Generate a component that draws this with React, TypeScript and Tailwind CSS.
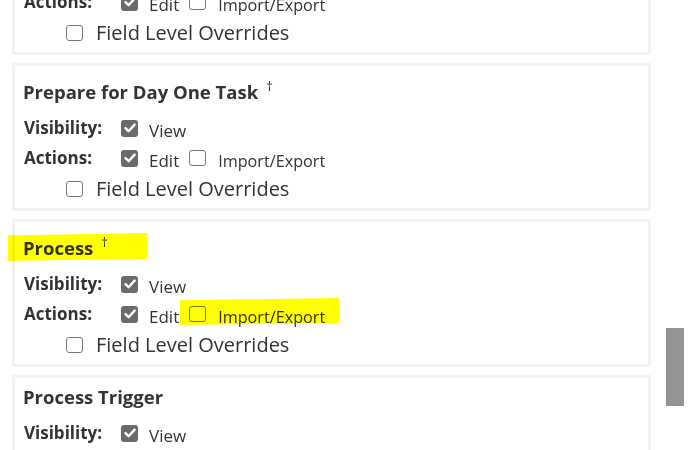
type Perm = {
  title: string;
  dagger?: boolean;
  view: boolean;
  edit: boolean;
  importExport: boolean;
  fieldOverrides: boolean;
};

const sections: Perm[] = [
  { title: "Onboarding Task", dagger: true, view: true, edit: true, importExport: false, fieldOverrides: false },
  { title: "Prepare for Day One Task", dagger: true, view: true, edit: true, importExport: false, fieldOverrides: false },
  { title: "Process", dagger: true, view: true, edit: true, importExport: false, fieldOverrides: false },
  { title: "Process Trigger", view: true, edit: true, importExport: false, fieldOverrides: false },
];

const Checkbox = ({ checked }: { checked: boolean }) =>
  checked ? (
    <span className="flex h-[17px] w-[17px] shrink-0 items-center justify-center rounded-[3px] bg-[#6b6b6b]">
      <svg width="12" height="10" viewBox="0 0 12 10" fill="none">
        <path d="M1.5 5.2 4.6 8.2 10.6 1.6" stroke="#fff" strokeWidth="2.4" strokeLinecap="round" strokeLinejoin="round" />
      </svg>
    </span>
  ) : (
    <span className="block h-[16px] w-[17px] shrink-0 rounded-[3px] border-[1.5px] border-[#767676] bg-white" />
  );

// yellow marker stroke, drawn over the text like a highlighter
const Marker = ({ className }: { className: string }) => (
  <svg className={`pointer-events-none absolute mix-blend-multiply ${className}`} viewBox="0 0 100 100" preserveAspectRatio="none">
    <path d="M0 8 L40 5 L100 0 L100 93 L60 95 L0 100 Z" fill="#ffff00" />
  </svg>
);

const Section = ({ s }: { s: Perm }) => (
  <div className="h-[148px] shrink-0 border-[3px] border-[#f2f2f2] bg-white pl-[8px] text-[#333]">
    <div className={`${s.dagger ? "mt-[14px]" : "mt-[7px]"} h-[24px] text-[18.5px] font-bold leading-[24px]`}>
      {s.title}
      {s.dagger && <span className="relative top-[-8px] ml-[8px] text-[13px] font-normal">†</span>}
    </div>
    <div className="mt-[9px] flex h-[30px] items-center">
      <span className="w-[98px] pl-[1px] text-[17px] font-bold">Visibility:</span>
      <Checkbox checked={s.view} />
      <span className="ml-[11px] pt-[6px] text-[17px]">View</span>
    </div>
    <div className="flex h-[30px] items-center">
      <span className="w-[98px] pl-[1px] text-[17px] font-bold">Actions:</span>
      <Checkbox checked={s.edit} />
      <span className="ml-[11px] mr-[10px] pt-[6px] text-[17px]">Edit</span>
      <Checkbox checked={s.importExport} />
      <span className="ml-[12px] pt-[6px] text-[16.2px]">Import/Export</span>
    </div>
    <div className="mt-[1px] flex h-[30px] items-center pl-[43px]">
      <Checkbox checked={s.fieldOverrides} />
      <span className="ml-[13px] text-[20px]">Field Level Overrides</span>
    </div>
  </div>
);

export default function App() {
  return (
    <div className="relative h-[450px] w-[699px] overflow-hidden bg-white font-['Open_Sans',sans-serif]">
      <div className="mt-[-93px] ml-[12px] flex w-[639px] flex-col gap-[8px]">
        {sections.map((s) => (
          <Section key={s.title} s={s} />
        ))}
      </div>
      <Marker className="left-[8px] top-[233px] h-[28px] w-[139px]" />
      <Marker className="left-[180px] top-[298px] h-[27px] w-[159px]" />
      <div className="absolute left-[666px] top-[328px] h-[78px] w-[18px] bg-[#949494]" />
    </div>
  );
}
